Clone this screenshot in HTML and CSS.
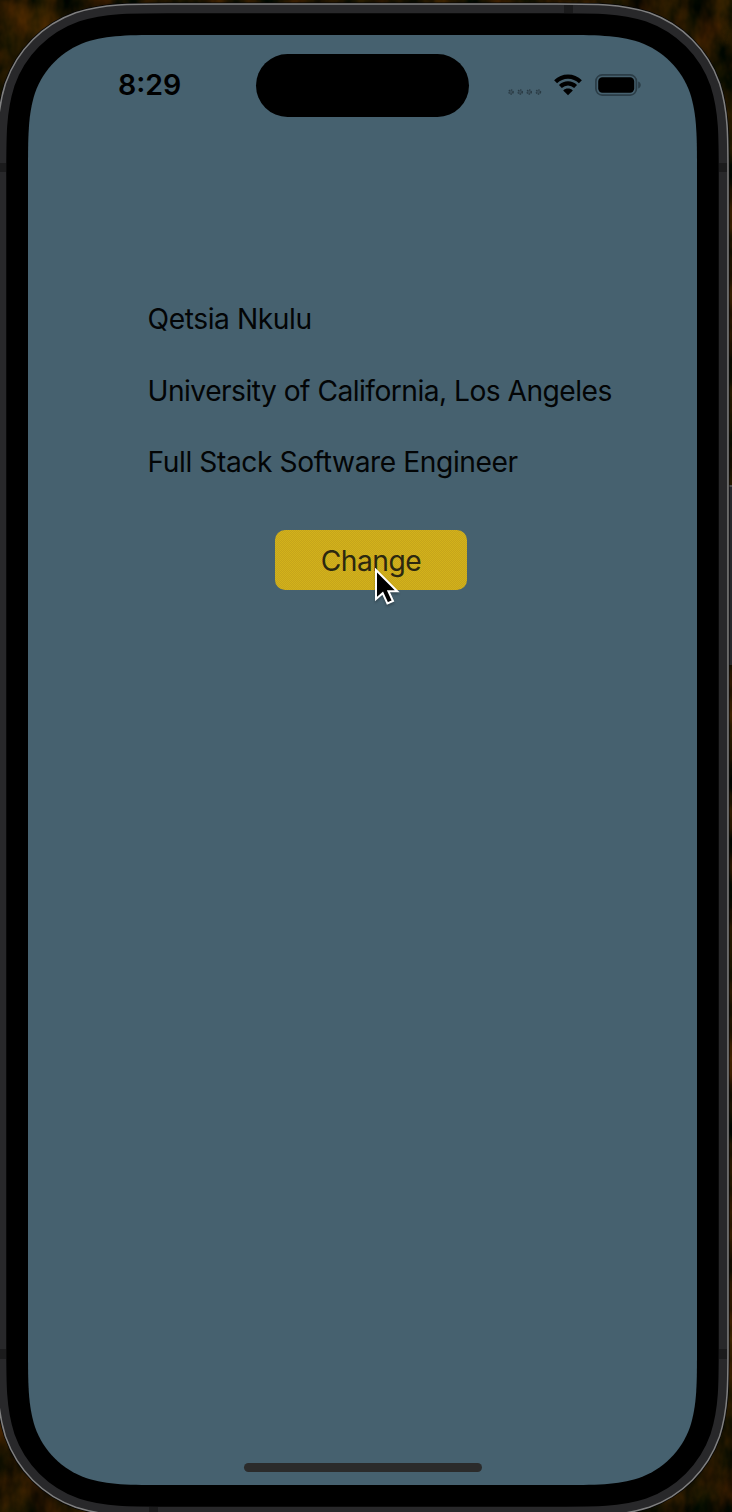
FILE: index.html
```html
<!DOCTYPE html>
<html lang="en">
<head>
<meta charset="utf-8">
<title>Profile</title>
<link rel="stylesheet" href="styles.css">
</head>
<body>
<main class="stage">
  <svg class="device" viewBox="0 0 732 1512" aria-hidden="true">
    <defs>
      <filter id="leaves" x="0" y="0" width="100%" height="100%" color-interpolation-filters="sRGB">
        <feTurbulence type="fractalNoise" baseFrequency=".035 .02" numOctaves="4" seed="8"/>
        <feColorMatrix values=".5 0 0 0 -.13  .22 .06 0 0 -.06  0 0 0 0 0  0 0 0 0 1"/>
      </filter>
      <path id="screen" d="M28 176C28 135 28 115 35 93C43.5 69 62 50.5 86 42C108 35 128 35 169 35H556C597 35 617 35 639 42C663 50.5 681.5 69 690 93C697 115 697 135 697 176V1344C697 1385 697 1405 690 1427C681.5 1451 663 1469.5 639 1478C617 1485 597 1485 556 1485H169C128 1485 108 1485 86 1478C62 1469.5 43.5 1451 35 1427C28 1405 28 1385 28 1344Z"/>
    </defs>
    <rect width="732" height="1512" filter="url(#leaves)"/>
    <path class="window-edge" d="M728 485h4v180h-4z"/>
    <path class="window-line" d="M728 485h4v2h-4z"/>
    <use href="#screen" class="rim-shadow"/>
    <use href="#screen" class="rim"/>
    <use href="#screen" class="frame"/>
    <path class="antenna" d="M564 5h9v8h-9zM0 163h6v9H0zM719 163h8v9h-8zM0 1349h6v10H0zM719 1349h8v10h-8zM149 1507h9v5h-9z"/>
    <use href="#screen" class="bezel"/>
    <use href="#screen" class="glass"/>
  </svg>

  <section class="screen">
    <header class="status">
      <span class="time">8:29</span>
      <div class="island"></div>
      <div class="indicators">
        <svg class="signal" viewBox="0 0 35 6"><circle cx="3" cy="3" r="2.1"/><circle cx="12.2" cy="3" r="2.1"/><circle cx="21.2" cy="3" r="2.1"/><circle cx="30.4" cy="3" r="2.1"/></svg>
        <svg class="wifi" viewBox="0 0 28 22"><path d="M1.6 7.7C8.6.8 19.4.8 26.4 7.7M6.4 12.5C10.8 8.3 17.2 8.3 21.6 12.5"/><path class="solid" d="M14 21.2 9.2 16.4C11.8 14 16.2 14 18.8 16.4Z"/></svg>
        <svg class="battery" viewBox="0 0 46 22"><rect class="shell" x=".9" y=".9" width="40.5" height="20.2" rx="6.3"/><rect x="3.2" y="3.2" width="36" height="15.6" rx="4.2"/><path class="tip" d="M43.2 7.5C46.6 8.8 46.6 13.2 43.2 14.5Z"/></svg>
      </div>
    </header>

    <div class="profile">
      <p class="line name">Qetsia Nkulu</p>
      <p class="line school">University of California, Los Angeles</p>
      <p class="line role">Full Stack Software Engineer</p>
    </div>
    <button class="change" type="button">Change
      <svg class="cursor" viewBox="0 0 26 40"><path d="M2 2V31L8.7 25.2L13.4 35.4L19 33L14.4 23.2H23.2Z"/></svg>
    </button>
    <div class="home"></div>
  </section>
</main>
</body>
</html>
```
FILE: styles.css
```css
* { box-sizing: border-box; }
body { margin: 0; background: #080501; font-family: Inter, "Liberation Sans", sans-serif; }
.stage { position: relative; width: 732px; height: 1512px; overflow: hidden; }
.device { position: absolute; inset: 0; width: 732px; height: 1512px; }
.device use { fill: none; }
.device .rim-shadow { stroke: #070707; stroke-width: 65px; }
.device .rim { stroke: #808080; stroke-width: 63.5px; }
.device .frame { stroke: #28282a; stroke-width: 60.5px; }
.device .bezel { stroke: #000; stroke-width: 43.5px; }
.device .glass { fill: #46616f; }
.antenna { fill: #1b1b1c; }
.window-edge { fill: #28292c; }
.window-line { fill: #4c4c4c; }

.screen { position: relative; display: flex; flex-direction: column; width: 669px; height: 1450px; margin: 35px 0 0 28px; }
.status { display: flex; height: 101px; padding-top: 19px; }
.time { width: 228px; padding-left: 90px; font-size: 28.5px; line-height: 61px; font-weight: 600; }
.island { width: 213px; height: 63px; border-radius: 32px; background: #000; }
.indicators { display: flex; align-items: flex-start; padding: 20px 0 0 39px; }
.signal { width: 35px; height: 6px; margin-top: 15px; fill: #3b505c; stroke: #293a43; stroke-width: 1.4px; stroke-dasharray: 1.3 .9; }
.wifi { width: 28px; height: 22px; margin-left: 11px; fill: none; stroke: #000; stroke-width: 4.2px; }
.wifi .solid { fill: #000; stroke: none; }
.battery { width: 46px; height: 22px; margin-left: 13px; }
.battery .shell { fill: none; stroke: #2b3d47; stroke-width: 1.7px; }
.battery .tip { fill: #2b3d47; }

.profile { display: flex; flex-direction: column; gap: 35.5px; padding: 165px 0 0 119.5px; }
.line { margin: 0; font-size: 28.2px; line-height: 36px; white-space: nowrap; color: #030506; letter-spacing: -.42px; }
.school { letter-spacing: -.53px; }
.change { position: relative; align-self: flex-start; width: 192px; height: 60px; margin: 50px 0 0 247px; padding: 0; border: 0; border-radius: 10px; background: repeating-conic-gradient(#d3b21b 0 25%, #c6a51b 0 50%) 0 0 / 2px 2px; font: 400 28.2px/62px Inter, "Liberation Sans", sans-serif; color: #2c2810; letter-spacing: -.5px; }
.cursor { position: absolute; left: 99px; top: 38px; width: 26px; height: 40px; fill: #000; stroke: #fff; stroke-width: 2px; filter: drop-shadow(0 2px 1px rgba(0, 0, 0, .25)); }
.home { width: 238px; height: 9px; margin: auto 0 13px 216px; border-radius: 5px; background: #2b2b2b; }
```
